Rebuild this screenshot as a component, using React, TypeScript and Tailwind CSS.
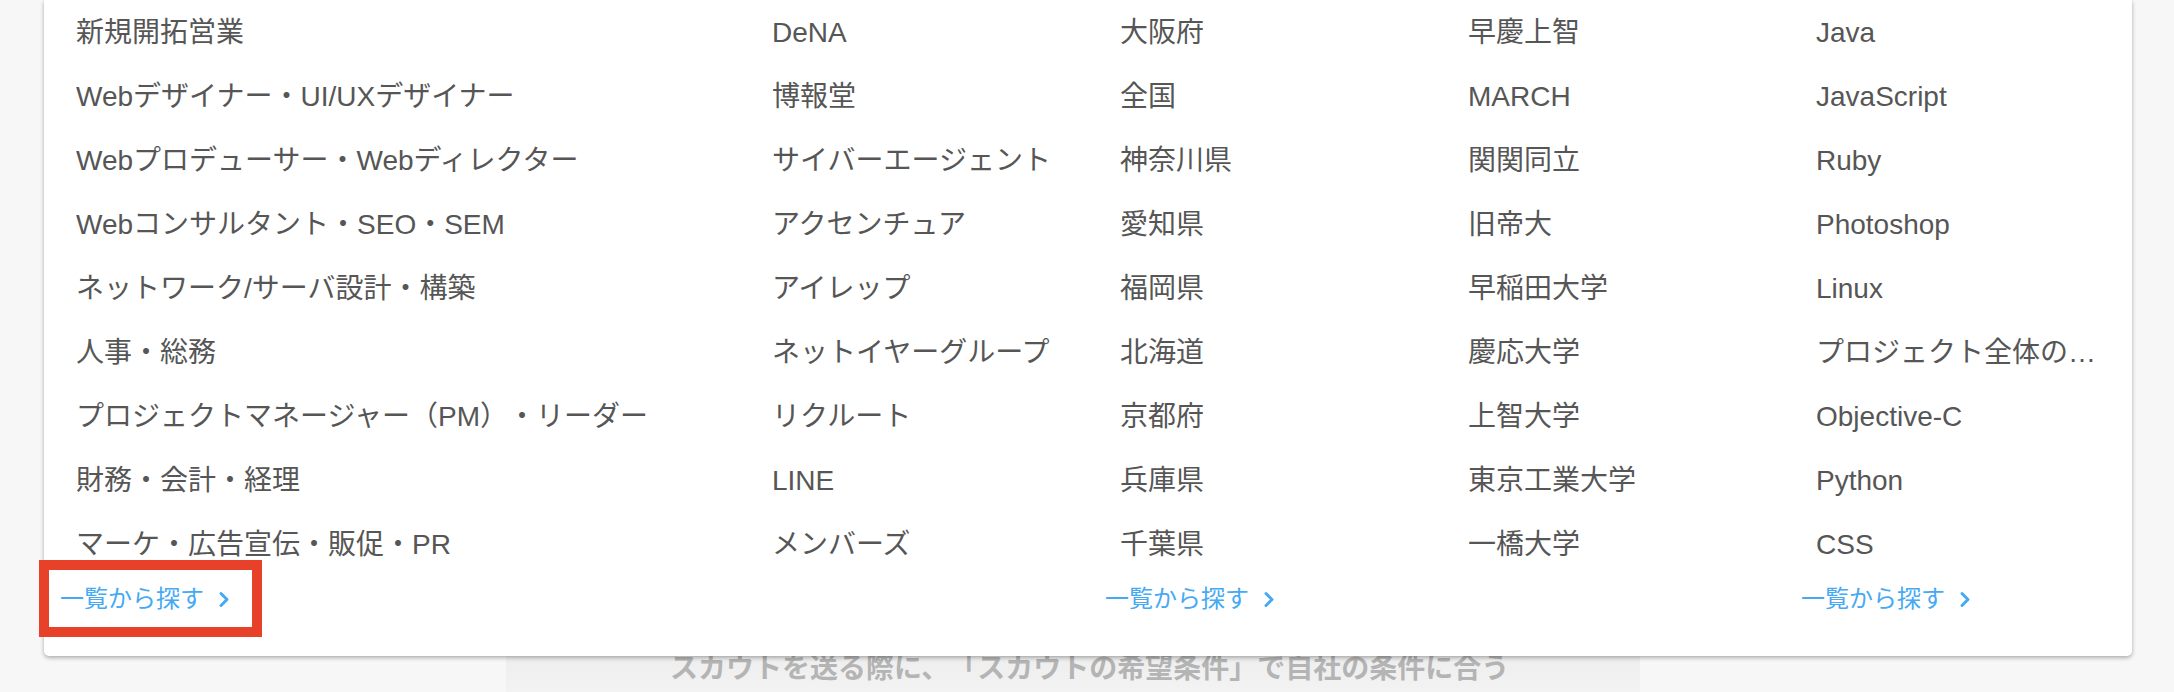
const jobs = [
  '新規開拓営業',
  'Webデザイナー・UI/UXデザイナー',
  'Webプロデューサー・Webディレクター',
  'Webコンサルタント・SEO・SEM',
  'ネットワーク/サーバ設計・構築',
  '人事・総務',
  'プロジェクトマネージャー（PM）・リーダー',
  '財務・会計・経理',
  'マーケ・広告宣伝・販促・PR',
]

const companies = ['DeNA', '博報堂', 'サイバーエージェント', 'アクセンチュア', 'アイレップ', 'ネットイヤーグループ', 'リクルート', 'LINE', 'メンバーズ']

const areas = ['大阪府', '全国', '神奈川県', '愛知県', '福岡県', '北海道', '京都府', '兵庫県', '千葉県']

const schools = ['早慶上智', 'MARCH', '関関同立', '旧帝大', '早稲田大学', '慶応大学', '上智大学', '東京工業大学', '一橋大学']

const skills = ['Java', 'JavaScript', 'Ruby', 'Photoshop', 'Linux', 'プロジェクト全体のマネジメント', 'Objective-C', 'Python', 'CSS']

function Column({ items, className = '' }: { items: string[]; className?: string }) {
  return (
    <ul className={`flex flex-col pl-[32px] pr-[26px] min-w-0 ${className}`}>
      {items.map((item) => (
        <li key={item} className="h-[64px] leading-[64px] text-[28px] text-[#565656] truncate">
          {item}
        </li>
      ))}
    </ul>
  )
}

function MoreLink() {
  return (
    <a className="flex items-center text-[24px] leading-[44px] text-[#45a9f3] cursor-pointer">
      一覧から探す
      <svg width="12" height="17" viewBox="0 0 12 17" className="ml-[14px]" fill="none">
        <path d="M3 2.5 L9 8.5 L3 14.5" stroke="currentColor" strokeWidth="3" strokeLinecap="round" strokeLinejoin="round" />
      </svg>
    </a>
  )
}

export default function App() {
  return (
    <div className="relative w-full h-[692px] overflow-hidden bg-[#f7f7f7] [text-spacing-trim:space-all] font-[family-name:'Liberation_Sans','Noto_Sans_CJK_JP',sans-serif]">
      {/* 検索パネル */}
      <div className="relative z-10 ml-[44px] w-[2088px] bg-white rounded-b-[5px] shadow-[0_2px_4px_rgba(0,0,0,0.28),0_0_3px_rgba(0,0,0,0.06)] pt-[1px] pb-[35px]">
        <div className="grid grid-cols-6">
          <Column items={jobs} className="col-span-2" />
          <Column items={companies} />
          <Column items={areas} />
          <Column items={schools} />
          <Column items={skills} />
        </div>

        {/* 一覧リンク */}
        <div className="grid grid-cols-6 h-[44px]">
          <div className="col-span-3 pl-[16px]">
            <MoreLink />
          </div>
          <div className="col-span-2 pl-[17px]">
            <MoreLink />
          </div>
          <div className="pl-[17px]">
            <MoreLink />
          </div>
        </div>
      </div>

      {/* 背面の見出し */}
      <div className="-mt-[1px] ml-[506px] w-[1134px] h-[40px] bg-gradient-to-b from-[#eeeeee] to-[#f3f3f3]">
        <p className="pl-[164px] text-[28px] leading-[28px] font-bold text-[#b4b4b4] whitespace-nowrap">
          スカウトを送る際に、「スカウトの希望条件」で自社の条件に合う
        </p>
      </div>

      {/* 注釈の赤枠 */}
      <div className="absolute left-[39px] top-[560px] w-[223px] h-[77px] border-[10px] border-[#e8412a] z-20" />
    </div>
  )
}
